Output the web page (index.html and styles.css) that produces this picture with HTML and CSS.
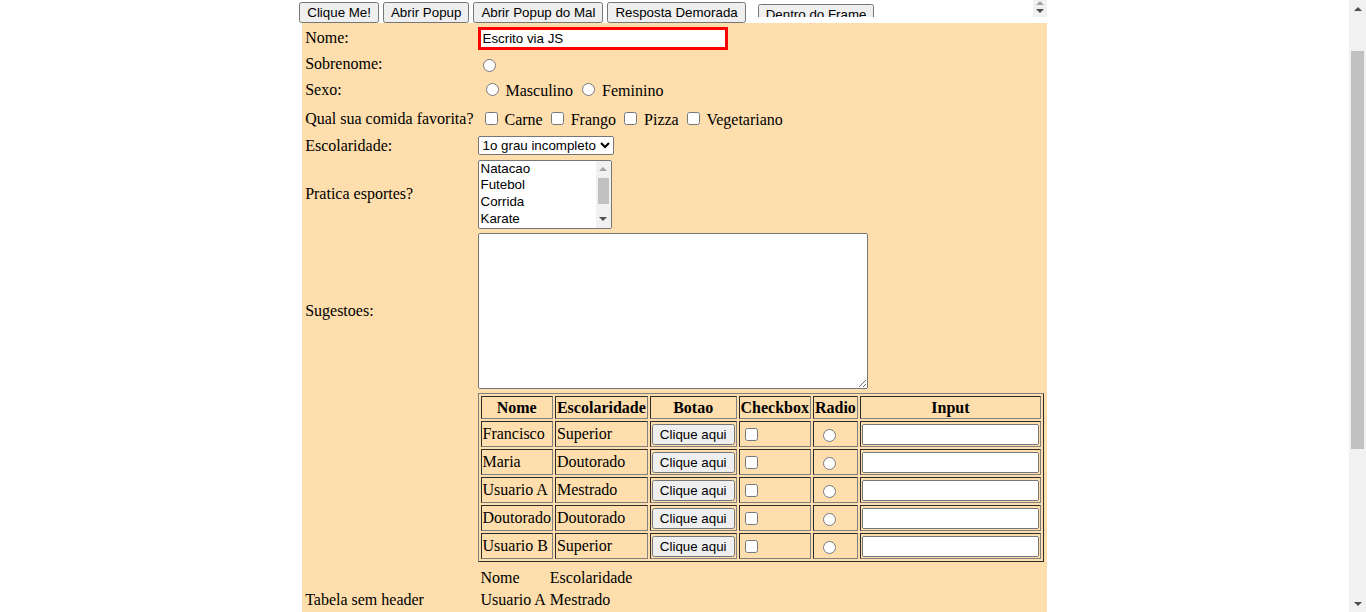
FILE: index.html
```html
<html lang="pt-BR">
<head>
<meta charset="utf-8">
<title>Campo de Treinamento</title>
<link rel="stylesheet" href="styles.css">
</head>
<body>
<div class="page">
<div class="toolbar">
<input type="button" value="Clique Me!"> <input type="button" value="Abrir Popup"> <input type="button" value="Abrir Popup do Mal"> <input type="button" value="Resposta Demorada"> <div class="frame"><div class="frame-inner"><div class="frame-body"><input type="button" class="frame-btn" value="Dentro do Frame"></div><div class="mini-sb"><span class="tri-up tri-light"></span><span class="tri-down tri-dark"></span></div></div></div>
</div>
<table class="form">
<tbody>
<tr class="row-nome"><td>Nome:</td><td><input type="text" class="nome" value="Escrito via JS"></td></tr>
<tr class="row-sobrenome"><td>Sobrenome:</td><td><input type="radio"></td></tr>
<tr class="row-sexo"><td>Sexo:</td><td><table class="opts"><tbody><tr><td><input type="radio" name="sexo" id="sexo0"> <label for="sexo0">Masculino</label></td><td><input type="radio" name="sexo" id="sexo1"> <label for="sexo1">Feminino</label></td></tr></tbody></table></td></tr>
<tr class="row-comida"><td>Qual sua comida favorita?</td><td><table class="opts"><tbody><tr><td><input type="checkbox" id="c0"> <label for="c0">Carne</label></td><td><input type="checkbox" id="c1"> <label for="c1">Frango</label></td><td><input type="checkbox" id="c2"> <label for="c2">Pizza</label></td><td><input type="checkbox" id="c3"> <label for="c3">Vegetariano</label></td></tr></tbody></table></td></tr>
<tr class="row-escolaridade"><td>Escolaridade:</td><td><select><option>1o grau incompleto</option><option>1o grau completo</option><option>2o grau incompleto</option><option>2o grau completo</option><option>Superior</option><option>Especializacao</option><option>Mestrado</option><option>Doutorado</option></select></td></tr>
<tr class="row-esportes"><td>Pratica esportes?</td><td><div class="listbox"><select multiple size="4" class="listbox-select"><option>Natacao</option><option>Futebol</option><option>Corrida</option><option>Karate</option><option>O que eh esporte?</option></select><div class="lb-sb"><div class="lb-btn"><span class="tri-up tri-light"></span></div><div class="lb-track"><div class="lb-thumb"></div></div><div class="lb-btn"><span class="tri-down tri-dark"></span></div></div></div></td></tr>
<tr class="row-sugestoes"><td>Sugestoes:</td><td><textarea class="sugestoes"></textarea></td></tr>
<tr><td></td><td>
<table class="data">
<thead><tr><th>Nome</th><th>Escolaridade</th><th>Botao</th><th>Checkbox</th><th>Radio</th><th>Input</th></tr></thead>
<tbody>
<tr><td>Francisco</td><td>Superior</td><td><input type="button" value="Clique aqui"></td><td><input type="checkbox"></td><td><input type="radio" class="rd" name="t1"></td><td><input type="text" class="cell-input"></td></tr>
<tr><td>Maria</td><td>Doutorado</td><td><input type="button" value="Clique aqui"></td><td><input type="checkbox"></td><td><input type="radio" class="rd" name="t2"></td><td><input type="text" class="cell-input"></td></tr>
<tr><td>Usuario A</td><td>Mestrado</td><td><input type="button" value="Clique aqui"></td><td><input type="checkbox"></td><td><input type="radio" class="rd" name="t3"></td><td><input type="text" class="cell-input"></td></tr>
<tr><td>Doutorado</td><td>Doutorado</td><td><input type="button" value="Clique aqui"></td><td><input type="checkbox"></td><td><input type="radio" class="rd" name="t4"></td><td><input type="text" class="cell-input"></td></tr>
<tr><td>Usuario B</td><td>Superior</td><td><input type="button" value="Clique aqui"></td><td><input type="checkbox"></td><td><input type="radio" class="rd" name="t5"></td><td><input type="text" class="cell-input"></td></tr>
</tbody>
</table>
</td></tr>
<tr><td>Tabela sem header</td><td>
<table class="plain">
<tbody>
<tr><td>Nome</td><td>Escolaridade</td></tr>
<tr><td>Usuario A</td><td>Mestrado</td></tr>
<tr><td>Usuario B</td><td>Superior</td></tr>
</tbody>
</table>
</td></tr>
<tr><td></td><td><input type="button" value="Cadastrar"></td></tr>
</tbody>
</table>
</div>
<div class="vscroll">
<div class="sb-btn"><span class="tri-up tri-dark"></span></div>
<div class="sb-track"><div class="sb-thumb"></div></div>
<div class="sb-btn"><span class="tri-down tri-dark"></span></div>
</div>
</body>
</html>
```
FILE: styles.css
```css
html,
body {
  height: 100%;
  margin: 0;
  overflow: hidden;
  background: #ffffff;
}

body {
  display: flex;
  font-family: "Liberation Serif", "Times New Roman", serif;
  font-size: 16px;
  color: #000000;
}

input,
button,
select {
  font-family: "Liberation Sans", Arial, sans-serif;
  font-size: 13.3333px;
}

textarea {
  font-family: "Liberation Mono", "Courier New", monospace;
  font-size: 13.3333px;
}

.page {
  flex: 1;
  min-width: 0;
  padding: 0 8px;
  overflow: hidden;
}

/* ---- top line: buttons + frame ---- */
.toolbar {
  text-align: center;
}

.frame {
  display: inline-block;
  width: 300px;
  height: 17px;
  overflow: hidden;
  background: #ffffff;
  text-align: left;
}

.frame-inner {
  display: flex;
  height: 100%;
}

.frame-body {
  flex: 1;
  padding: 4px 0 0 8px;
}

.frame-btn {
  margin: 0;
}

.mini-sb {
  width: 14px;
  margin-right: 3px;
  background: #f1f1f1;
  display: flex;
  flex-direction: column;
  align-items: center;
  gap: 4px;
  padding-top: 1px;
}

/* triangles for scrollbar arrows */
.tri-up,
.tri-down {
  display: block;
  width: 0;
  height: 0;
  border-left: 4px solid transparent;
  border-right: 4px solid transparent;
}

.tri-up {
  border-bottom: 4px solid #505050;
}

.tri-down {
  border-top: 4px solid #505050;
}

.tri-up.tri-light {
  border-bottom-color: #a3a3a3;
}

.tri-down.tri-light {
  border-top-color: #a3a3a3;
}

/* ---- main form ---- */
.form {
  margin: 0 auto;
  background-color: navajowhite;
}

.row-nome { height: 26px; }
.row-sobrenome { height: 22px; }
.row-sexo { height: 26px; }
.row-comida { height: 28px; }
.row-escolaridade { height: 21px; }
.row-esportes { height: 72px; }
.row-sugestoes { height: 158px; }

.opts td {
  padding: 0 1px;
}

.nome {
  box-sizing: border-box;
  width: 250px;
  border: 3px solid #ff0000;
}

/* listbox with its scrollbar */
.listbox {
  display: inline-flex;
  box-sizing: border-box;
  width: 134px;
  height: 69px;
  border: 1px solid #767676;
  border-radius: 2px;
  background: #ffffff;
  vertical-align: middle;
  overflow: hidden;
}

.listbox-select {
  flex: 1;
  min-width: 0;
  border: none;
  outline: none;
  overflow: hidden;
  margin: 0;
  padding: 0;
  height: 67px;
  background: transparent;
}

.lb-sb {
  width: 15px;
  background: #f1f1f1;
  display: flex;
  flex-direction: column;
}

.lb-btn {
  height: 17px;
  display: flex;
  align-items: center;
  justify-content: center;
}

.lb-track {
  flex: 1;
}

.lb-thumb {
  height: 26px;
  margin: 0 2px;
  background: #c1c1c1;
}

.sugestoes {
  box-sizing: border-box;
  width: 390px;
  height: 156px;
  vertical-align: top;
}

/* ---- table with header ---- */
.data {
  border: 1px outset #808080;
}

.data th,
.data td {
  border: 1px inset #808080;
}

.data thead tr {
  height: 23px;
}

.data tbody tr {
  height: 26px;
}

.data .rd {
  margin-left: 8px;
}

.cell-input {
  box-sizing: border-box;
  width: 177px;
}

/* ---- page scrollbar ---- */
.vscroll {
  width: 17px;
  flex: none;
  background: #f1f1f1;
  display: flex;
  flex-direction: column;
}

.sb-btn {
  height: 17px;
  display: flex;
  align-items: center;
  justify-content: center;
}

.sb-track {
  flex: 1;
}

.sb-thumb {
  margin: 34px 2px 0;
  height: 398px;
  background: #c1c1c1;
}
```
